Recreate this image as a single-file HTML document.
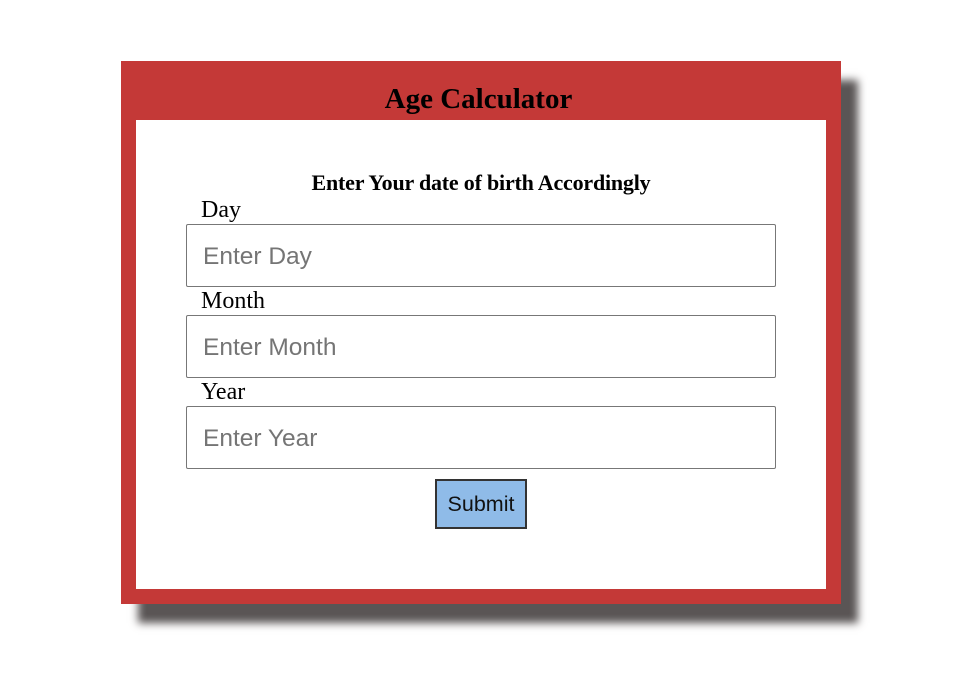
<!DOCTYPE html>
<html><head><style>
body{margin:0;background:#fff;width:957px;height:688px;position:relative;font-family:"Liberation Serif",serif;}
.box{position:absolute;left:121px;top:61px;width:720px;height:543px;background:#c43937;box-shadow:17px 19px 8px #5a5555;}
.title{position:absolute;left:0;right:0;top:83px;text-align:center;font-weight:bold;font-size:29px;}
.in{position:absolute;left:136px;top:120px;width:690px;height:469px;background:#fff;}
.sub{position:absolute;left:0;width:962px;top:170px;text-align:center;font-weight:bold;font-size:22px;letter-spacing:-0.2px;}
.lbl{position:absolute;left:201px;font-size:24px;}
.inp{position:absolute;left:186px;border:1px solid #777;border-radius:2px;font-family:"Liberation Sans",sans-serif;font-size:24.5px;color:#757575;line-height:63px;padding-left:16px;box-sizing:border-box;width:590px;height:63px;}
.btn{position:absolute;left:435px;top:479px;width:92px;height:50px;box-sizing:border-box;background:#8fbbe8;border:2px solid #333;font-family:"Liberation Sans",sans-serif;font-size:21.5px;text-align:center;line-height:47px;color:#111;}
</style></head><body>
<div class="box"></div>
<div class="in"></div>
<div class="title">Age Calculator</div>
<div class="sub">Enter Your date of birth Accordingly</div>
<div class="lbl" style="top:197px">Day</div>
<div class="inp" style="top:224px">Enter Day</div>
<div class="lbl" style="top:288px">Month</div>
<div class="inp" style="top:315px">Enter Month</div>
<div class="lbl" style="top:379px">Year</div>
<div class="inp" style="top:406px">Enter Year</div>
<div class="btn">Submit</div>
</body></html>
